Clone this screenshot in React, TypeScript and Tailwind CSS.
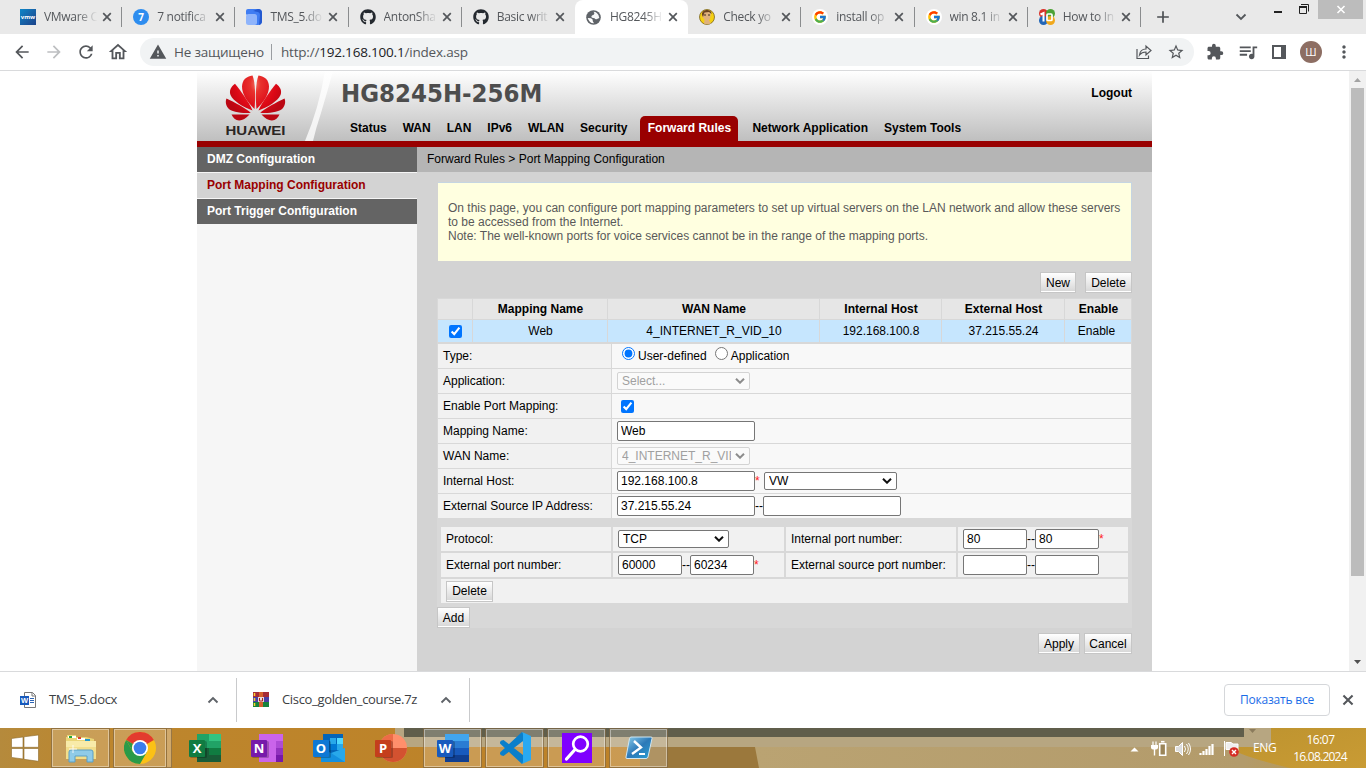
import React from "react";
import {
  MdArrowBack, MdArrowForward, MdRefresh, MdOutlineHome, MdWarning, MdStarBorder,
  MdQueueMusic, MdMoreVert, MdAdd,
} from "react-icons/md";
import { FaGithub } from "react-icons/fa";
import { FcGoogle } from "react-icons/fc";

const ui = "font-['Open_Sans','Noto_Sans',sans-serif]";

/* ---------- browser tabs ---------- */
const GoogleIcon = () => (
  <span className="flex h-4 w-4 items-center justify-center rounded-full bg-white"><FcGoogle size={14} /></span>
);

const tabs: { title: string; icon: React.ReactNode; active?: boolean; sep?: boolean }[] = [
  { title: "VMware C", sep: true, icon: (
    <span className="flex h-4 w-4 items-center justify-center bg-linear-to-br from-[#0a86c8] to-[#1a428a] text-[6px] font-bold text-white">vmw</span>) },
  { title: "7 notifica", sep: true, icon: (
    <span className="flex h-4 w-4 items-center justify-center rounded-full bg-[#2e8def] text-[10px] font-bold text-white">7</span>) },
  { title: "TMS_5.do", sep: true, icon: (
    <svg width="16" height="16" viewBox="0 0 16 16">
      <path d="M2 0h10q4 0 4 4v8q0 4-4 4H9L0 5V2q0-2 2-2z" fill="#3f7df3" />
      <path d="M7 2l5 1q2 .5 2 3l-1 10q3-1 3-4V4q0-4-4-4z" fill="#2459d0" />
      <rect x="0" y="5" width="11" height="11" rx="2.500" fill="#8fb4fb" />
    </svg>) },
  { title: "AntonSha", sep: true, icon: <FaGithub size={16} color="#24292f" /> },
  { title: "Basic writ", icon: <FaGithub size={16} color="#24292f" /> },
  { title: "HG8245H", active: true, icon: (
    <svg width="15" height="15" viewBox="0 0 15 15">
      <circle cx="7.500" cy="7.500" r="7.300" fill="#5f6368" />
      <path d="M7.500 1.800Q9 3 8 4.500L6 5.500q-1.500 1.500 0 2.300l2.500.4q1 1.800 2.500.8L13.300 8Q13 4.500 10.800 2.900 9.500 1.900 7.500 1.800z" fill="#fff" opacity=".95" />
      <path d="M1.700 8l3.300.3q2.300 1 1.800 3l1.200 2Q3.500 13.600 1.700 8z" fill="#fff" />
    </svg>) },
  { title: "Check yo", sep: true, icon: (
    <svg width="16" height="16" viewBox="0 0 16 16">
      <circle cx="8" cy="8" r="7.500" fill="#f4cf12" stroke="#6b5510" strokeWidth=".7" />
      <path d="M3.500 4c1-4 8-4 8.500 0l-1 5.500-1 2 2 3q-4 1.500-7 0l.5-4L3.500 8z" fill="#dfb17c" />
      <path d="M3 6c-1-6 10-7 9.500-1L10 3 5.500 3.500 4 8z" fill="#6b4320" />
      <path d="M5 6h2m2 0h2" stroke="#3b2c20" strokeWidth="1.200" />
    </svg>) },
  { title: "install op", sep: true, icon: <GoogleIcon /> },
  { title: "win 8.1 in", sep: true, icon: <GoogleIcon /> },
  { title: "How to In", sep: true, icon: (
    <svg width="16" height="16" viewBox="0 0 16 16">
      <circle cx="4.500" cy="4.500" r="4.500" fill="#d9342b" /><circle cx="11.500" cy="4.500" r="4.500" fill="#4ca336" />
      <circle cx="4.500" cy="11.500" r="4.500" fill="#2266b8" /><circle cx="11.500" cy="11.500" r="4.500" fill="#f0a81c" />
      <path d="M1.500 5.500L4.500 4v8.500" fill="none" stroke="#fff" strokeWidth="2" />
      <rect x="8" y="5" width="5" height="6.500" rx="1" fill="none" stroke="#fff" strokeWidth="1.700" />
    </svg>) },
];

const Cross = ({ size = 10 }: { size?: number }) => (
  <svg width={size} height={size} viewBox="0 0 10 10" className="shrink-0"><path d="M1.200 1.200l7.600 7.600m0-7.600L1.200 8.800" stroke="#54575b" strokeWidth="1.700" /></svg>
);

function TabStrip() {
  return (
    <div className="flex h-[34px] bg-[#e9e9e9] pl-[9px]">
      {tabs.map((t, i) => (
        <div key={i} className={`relative flex h-[34px] w-[113.2px] shrink-0 items-center pl-[11px] ${t.active ? "rounded-t-lg bg-white" : ""}`}>
          <span className="flex w-4 shrink-0 justify-center">{t.icon}</span>
          <span className="ml-2 w-[55px] whitespace-nowrap text-[12px] tracking-[-0.3px] text-[#54575b] [mask-image:linear-gradient(to_right,#000_60%,transparent_97%)]">{t.title}</span>
          <span className="ml-[3px] flex"><Cross /></span>
          {t.sep && <span className="absolute top-[7px] right-0 h-[20px] w-px bg-[#8a8c8e]" />}
        </div>
      ))}
      <div className="ml-[12px] flex items-center"><MdAdd size={20} color="#4b4e52" /></div>
      <svg className="ml-auto" width="135" height="34" viewBox="1231 0 135 34">
        <path d="M1236.500 14.500l4.500 4.500 4.500-4.500" fill="none" stroke="#54575b" strokeWidth="1.800" />
        <rect x="1274" y="11" width="8" height="2" fill="#222" />
        <path d="M1301 4.500h7.500v7" fill="none" stroke="#222" />
        <path d="M1299.500 6.500h7v7h-7z" fill="none" stroke="#222" /><path d="M1299 7h8" stroke="#222" strokeWidth="2" />
        <rect x="1318" y="0" width="45" height="19" fill="#bcbcbc" />
        <path d="M1337.500 6l7 7m0-7l-7 7" stroke="#fff" strokeWidth="1.600" />
      </svg>
    </div>
  );
}

function Toolbar() {
  return (
    <div className="flex h-[37px] items-center border-b border-[#d9dadc] bg-white pl-[12px] text-[#54575b]">
      <MdArrowBack size={20} />
      <MdArrowForward size={20} color="#bdbfc1" className="ml-[12px]" />
      <MdRefresh size={20} className="ml-[12px]" />
      <MdOutlineHome size={22} className="ml-[11px]" />
      <div className="ml-[11px] flex h-7 w-[1054px] items-center rounded-full bg-[#f1f3f4] pl-[9px] text-[13.5px] tracking-[-0.2px]">
        <MdWarning size={18} />
        <span className="ml-[7px] w-[90px] whitespace-nowrap">Не защищено</span>
        <span className="ml-[7px] h-4 w-px bg-[#9a9da1]" />
        <span className="ml-[9px] whitespace-nowrap">http://<span className="text-[#202124]">192.168.100.1</span>/index.asp</span>
        <svg className="ml-auto" width="18" height="16" viewBox="0 0 18 16" fill="none" stroke="#54575b" strokeWidth="1.200">
          <path d="M2 5v9.500h11.500v-3" />
          <path d="M4.500 11c.5-4 3-6 6.500-6V2l5 4.500-5 4.500V8c-3 0-5 1-6.500 3z" />
        </svg>
        <MdStarBorder size={18} className="ml-[14px] mr-[9px]" />
      </div>
      <svg width="18" height="18" viewBox="0 0 24 24" className="ml-[12px]" fill="#54575b"><path d="M20.500 11H19V7c0-1.100-.9-2-2-2h-4V3.500a2.500 2.500 0 0 0-5 0V5H4c-1.100 0-2 .9-2 2v3.800h1.500a2.700 2.700 0 0 1 0 5.400H2V20c0 1.100.9 2 2 2h3.800v-1.500a2.700 2.700 0 0 1 5.400 0V22H17c1.100 0 2-.9 2-2v-4h1.500a2.500 2.500 0 0 0 0-5z" /></svg>
      <MdQueueMusic size={22} className="ml-[13px]" />
      <svg width="14" height="14" viewBox="0 0 14 14" className="ml-[13px]"><path d="M1 1h12v12H1z" fill="none" stroke="#54575b" strokeWidth="2" /><path d="M9 1h4v12H9z" fill="#54575b" /></svg>
      <span className="ml-[14px] flex h-[22px] w-[22px] items-center justify-center rounded-full bg-[#8d6e63] text-[11px] leading-[22px] text-white">Ш</span>
      <MdMoreVert size={20} className="ml-[12px]" />
    </div>
  );
}

/* ---------- router page ---------- */
function HeaderArt() {
  const half = (
    <>
      <path d="M254.500 109C247 102 242 94 242 86.500C242.500 80 246 76.500 252.500 75.600C255.500 83 255.600 98 254.500 109z" />
      <path d="M252.500 110.500C243 107 233 101 230.500 95C229 91 230.500 87 235 83.800C240 90 249 102 252.500 110.500z" />
      <path d="M250.800 112.800C242 113.500 231 112 228 108C225.500 105 225.400 101 226.500 98.500C234 102 246 108.500 250.800 112.800z" />
      <path d="M249.500 114.600C246 118.500 242 120.800 239 120.600C235.500 120.300 233 117.500 231.500 114.400z" />
    </>
  );
  return (
    <svg width="144" height="70" viewBox="197 71 144 70" className="shrink-0">
      <defs>
        <radialGradient id="petal" gradientUnits="userSpaceOnUse" cx="261" cy="84" r="36">
          <stop offset="0" stopColor="#f79a88" /><stop offset=".3" stopColor="#e8312d" /><stop offset=".7" stopColor="#dd0816" /><stop offset="1" stopColor="#bb0713" />
        </radialGradient>
        <linearGradient id="slash" x1="0" y1="0" x2="0" y2="1"><stop offset="0" stopColor="#fff" /><stop offset="1" stopColor="#f1f1f1" /></linearGradient>
      </defs>
      <path d="M305 141Q319 108 325 71H333Q327 93 321 113Q316 128 313 141z" fill="url(#slash)" />
      <g fill="url(#petal)">{half}<g transform="matrix(-1 0 0 1 511 0)">{half}</g></g>
      <text x="225.500" y="135" textLength="60" lengthAdjust="spacingAndGlyphs" fontSize="13.500" fontWeight="700" fill="#2b2523" fontFamily="Liberation Sans, sans-serif">HUAWEI</text>
    </svg>
  );
}

function Header() {
  const item = "whitespace-nowrap";
  return (
    <header className="border-b-[6px] border-[#990000]">
      <div className="flex h-[70px] bg-linear-to-b from-white to-[#bfbfbf]">
        <HeaderArt />
        <div className="flex grow flex-col">
          <div className="flex h-[45px] justify-between pr-[20px]">
            <h1 className="font-['DejaVu_Sans_Condensed','DejaVu_Sans',sans-serif] text-[25.5px] leading-[45px] font-bold text-[#4d4d4d] [font-stretch:condensed]">HG8245H-256M</h1>
            <span className="leading-[45px] font-bold">Logout</span>
          </div>
          <nav className="flex h-[25px] items-center gap-4 pl-[9px] leading-[23px] font-bold">
            <span className={item}>Status</span><span className={item}>WAN</span><span className={item}>LAN</span>
            <span className={item}>IPv6</span><span className={item}>WLAN</span><span className={item}>Security</span>
            <span className="-mr-[2px] -ml-[3px] h-[25px] w-[98px] rounded-t-[5px] bg-[#990000] text-center leading-[25px] whitespace-nowrap text-white">Forward Rules</span>
            <span className={item}>Network Application</span><span className={item}>System Tools</span>
          </nav>
        </div>
      </div>
    </header>
  );
}

function Btn({ children, w }: { children: string; w: string }) {
  return (
    <button className={`flex h-[21px] shrink-0 items-center justify-center border border-[#c6c6c6] bg-linear-to-b from-white to-[#d6d6d6] shadow-[inset_0_-1px_0_#fff] ${w}`}>{children}</button>
  );
}

function Field({ value = "", w = "w-[138px]" }: { value?: string; w?: string }) {
  return <input readOnly value={value} className={`h-5 shrink-0 rounded-[2px] border border-[#767676] bg-white px-[3px] text-[12px] ${w}`} />;
}

function Select({ value, w, disabled }: { value: string; w: string; disabled?: boolean }) {
  return (
    <div className={`flex h-[18px] shrink-0 items-center rounded-[2px] border pl-1 ${w} ${disabled ? "border-[#d3d3d3] bg-[#fafafa] text-[#a0a0a0]" : "border-[#767676] bg-white"}`}>
      <span className="min-w-0 grow overflow-hidden whitespace-nowrap">{value}</span>
      <svg width="10" height="6" viewBox="0 0 10 6" className="mr-[4px] ml-[4px] shrink-0"><path d="M1 .7l4 4 4-4" fill="none" stroke={disabled ? "#8c8c8c" : "#101010"} strokeWidth="2" /></svg>
    </div>
  );
}

const Dash = () => <span className="w-2 shrink-0 text-center">--</span>;
const Star = () => <span className="text-[#ff2020]">*</span>;

function FormRow({ label, children }: { label: string; children: React.ReactNode }) {
  return (
    <div className="flex h-[25px] border-b border-[#d8d8d8]">
      <div className="flex w-[173px] items-center bg-[#f1f1f1] pl-[5px] whitespace-nowrap">{label}</div>
      <div className="ml-px flex grow items-center bg-[#f8f8f8] pl-[5px]">{children}</div>
    </div>
  );
}

function MappingTable() {
  const cols = "grid grid-cols-[34px_134px_211px_121px_122px_66px] gap-px";
  const head = ["", "Mapping Name", "WAN Name", "Internal Host", "External Host", "Enable"];
  const row = ["Web", "4_INTERNET_R_VID_10", "192.168.100.8", "37.215.55.24", "Enable"];
  const cell = "flex items-center justify-center";
  return (
    <>
      <div className={`h-5 ${cols}`}>{head.map((h) => <div key={h} className={`${cell} bg-[#e6e6e6] pl-px font-bold`}>{h}</div>)}</div>
      <div className={`mt-px mb-[2px] h-[22px] ${cols}`}>
        <div className={`${cell} bg-[#c6e6fe]`}><input type="checkbox" checked readOnly className="h-[13px] w-[13px] accent-[#0075ff]" /></div>
        {row.map((r) => <div key={r} className={`${cell} bg-[#c6e6fe] pl-px last:pr-1`}>{r}</div>)}
      </div>
    </>
  );
}

function Content() {
  const cell = "flex items-center bg-[#f1f1f1] whitespace-nowrap";
  return (
    <main className="flex grow flex-col bg-[#d3d3d3]">
      <div className="h-[25px] bg-[#b5b5b5] pl-[10px] leading-[24px]">Forward Rules &gt; Port Mapping Configuration</div>
      <div className="mt-[10px] ml-[20px] w-[695px]">
        <div className="ml-px h-[79px] border-t border-r border-[#c5d5e2] bg-[#ffffe0] pt-[18px] pl-[10px] leading-[14px] whitespace-nowrap text-[#595959]">
          On this page, you can configure port mapping parameters to set up virtual servers on the LAN network and allow these servers<br />
          to be accessed from the Internet.<br />
          Note: The well-known ports for voice services cannot be in the range of the mapping ports.
        </div>
        <div className="mt-[11px] flex justify-end gap-[9px]"><Btn w="w-[36px]">New</Btn><Btn w="w-[47px]">Delete</Btn></div>
        <div className="mt-[5px] h-[330px] bg-[#d8d8d8] pt-px pl-px">
          <div className="w-[693px]">
            <MappingTable />
            <FormRow label="Type:">
              <input type="radio" checked readOnly className="mr-[3px] ml-[5px] -mt-[5px] h-[13px] w-[13px] accent-[#0075ff]" />User-defined
              <input type="radio" readOnly className="mr-[3px] ml-[8px] -mt-[5px] h-[13px] w-[13px]" />Application
            </FormRow>
            <FormRow label="Application:"><Select value="Select..." w="w-[133px]" disabled /></FormRow>
            <FormRow label="Enable Port Mapping:"><input type="checkbox" checked readOnly className="ml-1 mt-px h-[13px] w-[13px] accent-[#0075ff]" /></FormRow>
            <FormRow label="Mapping Name:"><Field value="Web" /></FormRow>
            <FormRow label="WAN Name:"><Select value="4_INTERNET_R_VID_10" w="w-[133px]" disabled /></FormRow>
            <FormRow label="Internal Host:"><Field value="192.168.100.8" /><span className="w-[9px]"><Star /></span><Select value="VW" w="w-[133px]" /></FormRow>
            <FormRow label="External Source IP Address:"><Field value="37.215.55.24" /><Dash /><Field /></FormRow>
          </div>
          <div className="mt-2 ml-[3px] grid w-[687px] grid-cols-[170px_171px_170px_170px] grid-rows-[24px_24px_24px] gap-[2px]">
            <div className={`${cell} pl-[5px]`}>Protocol:</div>
            <div className={`${cell} pl-[5px]`}><Select value="TCP" w="w-[111px]" /></div>
            <div className={`${cell} pl-[5px]`}>Internal port number:</div>
            <div className={`${cell} pl-[5px]`}><Field value="80" w="w-16" /><Dash /><Field value="80" w="w-16" /><Star /></div>
            <div className={`${cell} pl-[5px]`}>External port number:</div>
            <div className={`${cell} pl-[5px]`}><Field value="60000" w="w-16" /><Dash /><Field value="60234" w="w-16" /><Star /></div>
            <div className={`${cell} pl-[5px]`}>External source port number:</div>
            <div className={`${cell} pl-[5px]`}><Field w="w-16" /><Dash /><Field w="w-16" /></div>
            <div className={`${cell} col-span-4 pl-[5px]`}><Btn w="w-[47px]">Delete</Btn></div>
          </div>
          <div className="mt-1 -ml-px flex"><Btn w="w-[33px]">Add</Btn></div>
        </div>
        <div className="mt-[5px] flex justify-end gap-1"><Btn w="w-[42px]">Apply</Btn><Btn w="w-[48px]">Cancel</Btn></div>
      </div>
    </main>
  );
}

function RouterPage() {
  const menu = "h-[25px] pl-[10px] leading-[24px] font-bold mb-px";
  return (
    <div className="flex h-[600px] bg-white font-['Liberation_Sans',Arial,sans-serif] text-[12px] text-black">
      <div className="ml-[197px] flex w-[955px] flex-col">
        <Header />
        <div className="flex grow">
          <aside className="w-[220px] shrink-0 bg-[#f6f6f6]">
            <div className={`${menu} bg-[#646464] text-white`}>DMZ Configuration</div>
            <div className={`${menu} bg-[#d3d3d3] text-[#990000]`}>Port Mapping Configuration</div>
            <div className={`${menu} bg-[#646464] text-white`}>Port Trigger Configuration</div>
          </aside>
          <Content />
        </div>
      </div>
      <div className="ml-auto flex w-[17px] flex-col items-center bg-[#f1f1f1]">
        <svg width="17" height="17" viewBox="0 0 17 17"><path d="M5 11h7L8.500 7z" fill="#a3a3a3" /></svg>
        <div className="h-[488px] w-[13px] bg-[#bcbcbc]" />
        <svg className="mt-auto" width="17" height="17" viewBox="0 0 17 17"><path d="M5 6h7l-3.500 4z" fill="#505050" /></svg>
      </div>
    </div>
  );
}

/* ---------- downloads ---------- */
const Caret = () => <svg width="12" height="8" viewBox="0 0 12 8"><path d="M1.500 6.500L6 2l4.500 4.500" fill="none" stroke="#5f6368" strokeWidth="1.900" /></svg>;

function Downloads() {
  return (
    <div className="flex h-[57px] items-center border-t border-[#d9dadc] bg-white text-[13px] tracking-[-0.33px] text-[#3c4043]">
      <div className="flex h-11 w-[237px] items-center border-r border-[#c9cacc] pl-[20px]">
        <svg width="16" height="16" viewBox="0 0 16 16">
          <path d="M4.500.5h8l3 3v12h-11z" fill="#fff" stroke="#777" /><path d="M12 .5V4h3.500" fill="none" stroke="#777" />
          <path d="M10 6.500h4M10 8.500h4M10 10.500h4" stroke="#2b63b5" /><rect y="4" width="9" height="9" fill="#185abd" />
          <text x="1" y="11" fontSize="7.500" fontWeight="700" fill="#fff" fontFamily="Liberation Sans, sans-serif">W</text>
        </svg>
        <span className="ml-[13px] grow whitespace-nowrap">TMS_5.docx</span>
        <span className="mr-[17px]"><Caret /></span>
      </div>
      <div className="flex h-11 w-[233px] items-center border-r border-[#c9cacc] pl-[16px]">
        <svg width="16" height="16" viewBox="0 0 16 16">
          <path d="M0 0h16v5H0z" fill="#a52b36" /><path d="M0 5h16v5H0z" fill="#4a3fa5" /><path d="M0 10h16v5H0z" fill="#16823c" />
          <path d="M1.500 1v3M1.500 6v3M1.500 11v3" stroke="#ffd22e" strokeWidth="1.500" /><path d="M6 0h4v15H6z" fill="#d4602b" />
          <path d="M5 5h6v5H5z" fill="#e8d9d5" /><path d="M6.500 6v3h3V6" fill="none" stroke="#a22" />
        </svg>
        <span className="ml-[13px] grow whitespace-nowrap">Cisco_golden_course.7z</span>
        <span className="mr-[17px]"><Caret /></span>
      </div>
      <button className="ml-auto flex h-8 w-[106px] items-center justify-center rounded-[4px] border border-[#d5d7da] text-[12px] font-medium tracking-[-0.2px] whitespace-nowrap text-[#1a6ce8]">Показать все</button>
      <span className="mr-[12px] ml-[12px] flex"><Cross size={12} /></span>
    </div>
  );
}

/* ---------- taskbar ---------- */
function Letter({ c, fill }: { c: string; fill: string }) {
  return (
    <>
      <rect x="1" y="7" width="17" height="17" rx="1.500" fill="#000" opacity=".22" />
      <rect x="0" y="6" width="16" height="17" rx="1" fill={fill} />
      <text x="8" y="19" textAnchor="middle" fontSize="13" fontWeight="700" fill="#fff" fontFamily="Open Sans, sans-serif">{c}</text>
    </>
  );
}

const svgProps = { width: 32, height: 28, viewBox: "0 0 32 28" };
const apps: { open?: boolean; icon: React.ReactNode }[] = [
  { open: true, icon: (
    <svg width="32" height="30" viewBox="0 0 32 30">
      <path d="M2 4V2h9v2h10l8 2v18H1V4z" fill="#ead577" /><path d="M3 3h8v2H3zM12 5h8v2h-8z" fill="#fff" />
      <path d="M4 3h3v2H4z" fill="#22a63a" /><path d="M13 4h3v2h-3z" fill="#d43" /><path d="M20 6h5v2h-5z" fill="#29c" />
      <path d="M1 8h30v18H1z" fill="#f2de8b" /><path d="M1 8h30v6H1z" fill="#f8eba9" />
      <path d="M4 29V19q0-2 2-2h20q2 0 2 2v10h-6v-6H10v6z" fill="#8fcbe8" stroke="#5a9fc4" />
      <path d="M8 12v8M4 16h8" stroke="#fff" opacity=".85" />
    </svg>) },
  { open: true, icon: (
    <svg width="32" height="32" viewBox="0 0 32 32" className="shrink-0">
      <circle cx="16" cy="16" r="16" fill="#fbc116" /><path d="M16 16L2.140 8A16 16 0 0 1 29.860 8z" fill="#e33b2e" />
      <path d="M16 16l6.900 4L16 32A16 16 0 0 1 2.140 8l6.900 12z" fill="#2a9a48" /><path d="M9 20A8 8 0 0 1 9 12L2.140 8z" fill="#2a9a48" />
      <circle cx="16" cy="16" r="8" fill="#fff" /><circle cx="16" cy="16" r="6.300" fill="#3b7ded" />
    </svg>) },
  { icon: <svg {...svgProps}><rect x="8" width="12" height="14" fill="#21a366" /><rect x="20" width="12" height="7" fill="#33c481" /><rect x="20" y="7" width="12" height="7" fill="#21a366" /><rect x="8" y="14" width="24" height="14" fill="#185c37" /><rect x="20" y="14" width="12" height="7" fill="#107c41" /><Letter c="X" fill="#107c41" /></svg> },
  { icon: <svg {...svgProps}><rect x="8" width="24" height="28" fill="#ca64ea" /><rect x="25" y="7" width="7" height="7" fill="#ae4bd5" /><rect x="25" y="14" width="7" height="7" fill="#9332bf" /><rect x="25" y="21" width="7" height="7" fill="#7719aa" /><Letter c="N" fill="#7719aa" /></svg> },
  { icon: <svg {...svgProps}><rect x="10" width="20" height="20" fill="#0364b8" /><rect x="17" y="4" width="6" height="6" fill="#28a8ea" /><rect x="24" y="4" width="6" height="6" fill="#50d9ff" /><rect x="17" y="10" width="7" height="6" fill="#0078d4" /><rect x="24" y="10" width="6" height="6" fill="#28a8ea" /><path d="M8 14l12 6 12-6v14H8z" fill="#1490df" /><path d="M32 14v14L18 19z" fill="#28a8ea" /><Letter c="O" fill="#0f78d4" /></svg> },
  { icon: <svg {...svgProps}><circle cx="18" cy="14" r="14" fill="#ff8f6b" /><path d="M4 14A14 14 0 0 1 18 0v14z" fill="#ed6c47" /><path d="M4 14h28A14 14 0 0 1 4 14z" fill="#d35230" /><Letter c="P" fill="#c43e1c" /></svg> },
  { open: true, icon: <svg {...svgProps}><rect x="8" width="24" height="7" fill="#41a5ee" /><rect x="8" y="7" width="24" height="7" fill="#2b7cd3" /><rect x="8" y="14" width="24" height="7" fill="#185abd" /><rect x="8" y="21" width="24" height="7" fill="#103f91" /><Letter c="W" fill="#185abd" /></svg> },
  { open: true, icon: <svg width="32" height="32" viewBox="0 0 32 32"><path d="M24 9v14L4.500 8l-2.500.8q-1.800 1.700-.5 3.200L23 32l1-1V1l-1-1L1.500 20q-1.300 1.500.5 3.200l2.500.8z" fill="#0a7fcb" /><path d="M23 0l9 4v24l-9 4q1-1 1-3V3q0-2-1-3z" fill="#29a9f2" /></svg> },
  { open: true, icon: <svg width="30" height="30" viewBox="0 0 30 30"><rect width="30" height="30" fill="#7f00ff" /><circle cx="18.500" cy="11" r="7.300" fill="none" stroke="#fff" strokeWidth="2.700" /><path d="M13 16.500L4.500 26" stroke="#fff" strokeWidth="3.200" strokeLinecap="round" /></svg> },
  { open: true, icon: (
    <svg width="28" height="24" viewBox="0 0 28 24">
      <defs><linearGradient id="ps" x1="0" y1="0" x2="1" y2="1"><stop offset="0" stopColor="#8ed0ee" /><stop offset=".5" stopColor="#2c79b8" /><stop offset="1" stopColor="#2aa0d4" /></linearGradient></defs>
      <path d="M6 1h20q1.500 0 1 1.500L23 21q-.5 1.500-2 1.500H2q-1.500 0-1-1.500L4.500 2.500Q5 1 6 1z" fill="url(#ps)" stroke="#cfe6f2" />
      <path d="M9 5l7 6.500L7 18" fill="none" stroke="#fff" strokeWidth="2.400" /><path d="M14 18h6" stroke="#fff" strokeWidth="2" />
    </svg>) },
];

function Wallpaper() {
  return (
    <svg className="absolute inset-0" width="1366" height="40" viewBox="0 728 1366 40">
      <defs>
        <linearGradient id="w1"><stop offset="0" stopColor="#b58a3c" /><stop offset=".15" stopColor="#bd862d" /><stop offset="1" stopColor="#bd8127" /></linearGradient>
        <linearGradient id="w2"><stop offset="0" stopColor="#baa372" /><stop offset=".8" stopColor="#b39b6b" /><stop offset="1" stopColor="#bd983f" /></linearGradient>
        <linearGradient id="w3" x1="0" x2="1" y1="0" y2="1"><stop offset="0" stopColor="#bd932f" /><stop offset="1" stopColor="#c99b34" /></linearGradient>
      </defs>
      <rect y="728" width="670" height="40" fill="url(#w1)" />
      <rect x="640" y="728" width="120" height="40" fill="#9b783c" />
      <path d="M755 747h500l111-19v40H759z" fill="url(#w2)" />
      <path d="M1225 747q25 12 65 21h76v-40h-110z" fill="url(#w3)" />
      <rect x="395" y="728" width="876" height="19" fill="#b7a681" />
      <rect x="404" y="728" width="840" height="9" fill="#605e4b" />
      <path d="M1249 729h7l-3.500 4z" fill="#8b7b5c" />
    </svg>
  );
}

function Taskbar() {
  const lit = "border border-[#6f552d]/60 bg-white/20 shadow-[inset_0_0_0_1px_rgba(255,255,255,.4)]";
  return (
    <div className="relative h-10 overflow-hidden">
      <Wallpaper />
      <div className="relative flex h-10 items-center text-white">
        <svg width="51" height="40" viewBox="0 0 51 40" className="shrink-0" fill="#fff" stroke="#8c6a2c" strokeWidth=".6"><path d="M11.500 10.500L23 9v10.300H11.500zM24 8.800L38.500 7v12.300H24zM11.500 20.500H23V31l-11.500-1.600zM24 20.500h14.500V33.300L24 31.300z" /></svg>
        {apps.map((a, i) => (
          <div key={i} className={`relative flex h-10 shrink-0 items-center justify-center ${i === 1 ? "mr-2 w-[54px]" : "mr-[3px] w-[59px]"} ${a.open ? lit : ""}`}>
            {a.icon}
            {i === 1 && <span className="absolute -top-px -right-[6px] h-10 w-[5px] border border-l-0 border-[#6f552d]/60 bg-white/30" />}
          </div>
        ))}
        <svg className="ml-auto" width="120" height="40" viewBox="1125 728 120 40" fill="none" stroke="#fff">
          <path d="M1130.500 751.500h8l-4-4z" fill="#fff" stroke="none" />
          <path d="M1153 741.500v3.500m3-3.500v3.500" strokeWidth="1.200" /><path d="M1151 745h7v2.500q0 2-2 2h-3q-2 0-2-2z" fill="#fff" stroke="none" /><path d="M1154.500 749v6.500" strokeWidth="1.400" />
          <path d="M1159.700 743.700h6v11.600h-6z" fill="#9b8559" strokeWidth="1.600" /><path d="M1161 741.700h3.500" strokeWidth="1.600" />
          <path d="M1175.500 746.500h3l4-4v13l-4-4h-3z" fill="#ddd" /><path d="M1184.500 746q2 3 0 6m2-8q3.500 5 0 10m2-11q4 6 0 12" />
          <path d="M1200.500 755v-2m3 2v-4m3 4v-6m3 6v-9m3 9v-11" strokeWidth="2.200" />
          <path d="M1224.500 741v15M1226 742.500h5l2 1.500h5v7h-5l-2-1.500h-5z" fill="#eee" />
          <circle cx="1234" cy="752" r="4.800" fill="#d52d25" stroke="none" /><path d="M1232 750l4 4m0-4l-4 4" strokeWidth="1.400" />
        </svg>
        <span className="ml-[8px] w-[24px] text-[12px] tracking-[-0.4px]">ENG</span>
        <div className="ml-[13px] w-[60px] text-center text-[12px] leading-[17px] tracking-[-0.75px] whitespace-nowrap"><div className="pl-px tracking-[-0.5px]">16:07</div><div>16.08.2024</div></div>
        <div className="w-[16px] shrink-0" />
      </div>
    </div>
  );
}

export default function App() {
  return (
    <div className={`h-[768px] w-[1366px] overflow-hidden bg-white ${ui}`}>
      <TabStrip />
      <Toolbar />
      <RouterPage />
      <Downloads />
      <Taskbar />
    </div>
  );
}
